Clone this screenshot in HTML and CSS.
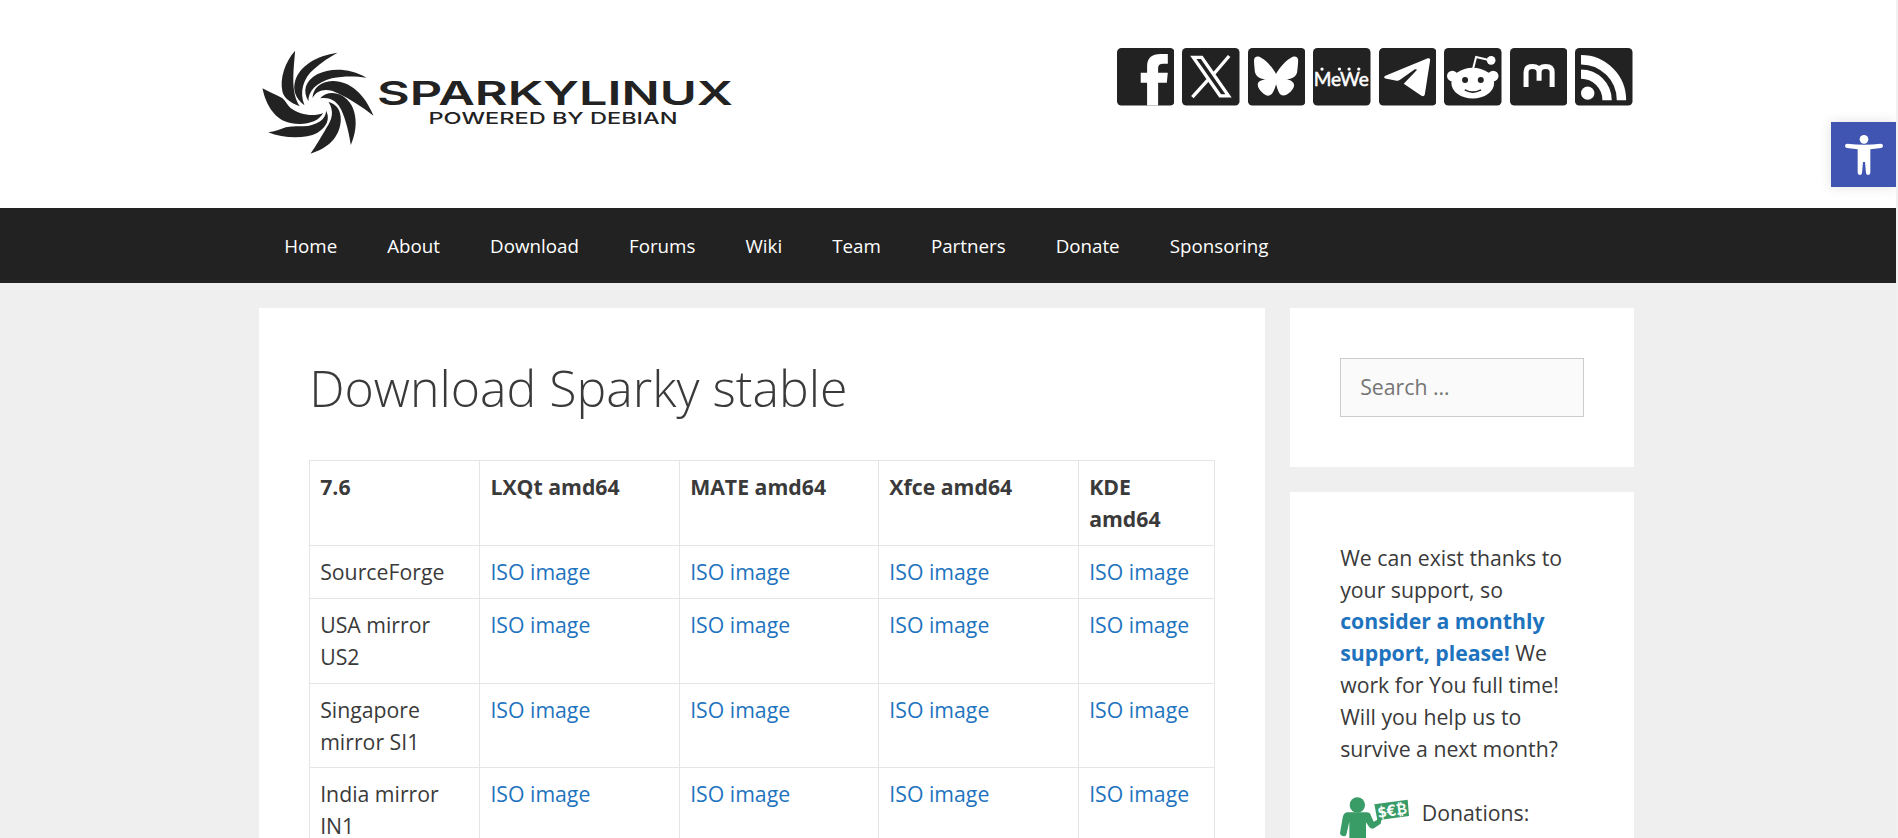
FILE: index.html
```html
<!DOCTYPE html>
<html lang="en">
<head>
<meta charset="utf-8">
<title>Download Sparky stable</title>
<link rel="stylesheet" href="styles.css">
</head>
<body>
<div class="page">
  <header class="header">
    <div class="wrap header-inner">
      <svg class="logo" viewBox="0 0 480 130" role="img" aria-label="SparkyLinux">
        <g transform="translate(-9.2 0) scale(.333333)">
          <g class="ink">
            <path d="M136 47C106 80 89 130 98 170C103 188 118 201 150 214C122 172 131 110 136 47Z"/>
            <path d="M263 53C200 62 150 92 136 138C128 168 138 190 164 211C148 172 160 130 192 103C214 82 240 66 263 53Z"/>
            <path d="M350 128C300 98 240 98 202 118C165 140 158 168 176 199C174 170 200 142 246 130C285 122 320 124 350 128Z"/>
            <path d="M371 242C345 178 300 137 248 138C212 140 190 158 188 190C200 162 235 158 264 175C301 192 335 215 371 242Z"/>
            <path d="M303 330C326 280 322 222 291 193C267 168 230 168 211 190C240 184 264 199 275 226C288 255 298 295 303 330Z"/>
            <path d="M182 356C236 340 271 305 273 255C273 226 262 208 236 201C254 228 247 254 230 278C213 308 200 330 182 356Z"/>
            <path d="M55 292C100 310 165 313 202 294C232 275 241 250 229 227C229 252 202 272 160 274C135 274 125 274 108 277C92 283 75 290 55 292Z"/>
            <path d="M38 160C48 210 76 256 122 264C165 272 205 262 220 234C192 246 150 240 122 219C112 210 108 198 98 190C80 180 60 172 38 160Z"/>
          </g>
        </g>
        <text class="logo-name" x="118" y="70" textLength="356" lengthAdjust="spacingAndGlyphs">SPARKYLINUX</text>
        <text class="logo-sub" x="169.5" y="89" textLength="249" lengthAdjust="spacingAndGlyphs">POWERED BY DEBIAN</text>
      </svg>
      <div class="social">
        <svg viewBox="0 0 172 172"><rect class="ink" width="172" height="172" rx="13"/><path class="w" d="M90 172V104H71V74H90V55C90 30 104 18 130 18H152V47H138C128 47 123 51 123 60V74H152L149 104H123V172Z"/></svg>
        <svg viewBox="0 0 172 172"><rect class="ink" width="172" height="172" rx="13"/><path class="s" stroke-width="10" d="M34 28H59L139 143H114ZM141 24L93 80M79 94L31 147"/></svg>
        <svg viewBox="0 0 172 172"><rect class="ink" width="172" height="172" rx="13"/><path class="w" transform="translate(18 18) scale(5.5)" d="M12 10.8c-1.087-2.114-4.046-6.053-6.798-7.995C2.566.944 1.561 1.266.902 1.565.139 1.908 0 3.08 0 3.768c0 .69.378 5.65.624 6.479.815 2.736 3.713 3.66 6.383 3.364-3.912.58-7.387 2.005-2.83 7.078 5.013 5.19 6.87-1.113 7.823-4.308.953 3.195 2.05 9.271 7.733 4.308 4.267-4.308 1.172-6.498-2.74-7.078 2.67.297 5.568-.628 6.383-3.364.246-.828.624-5.79.624-6.478 0-.69-.139-1.861-.902-2.206-.659-.298-1.664-.62-4.3 1.24C16.046 4.748 13.087 8.687 12 10.8Z"/></svg>
        <svg viewBox="0 0 172 172"><rect class="ink" width="172" height="172" rx="13"/><text class="mewe" x="2" y="114" textLength="165" lengthAdjust="spacingAndGlyphs">MeWe</text><g class="w"><circle cx="27" cy="63" r="5"/><circle cx="79" cy="63" r="5"/><circle cx="108" cy="63" r="5"/><circle cx="137" cy="63" r="5"/></g></svg>
        <svg viewBox="0 0 172 172"><rect class="ink" width="172" height="172" rx="13"/><path class="w" d="M146 31Q154 29 153 37L137 139Q135 147 127 143L74 107L114 65Q108 62 102 67L62 96Q56 100 49 97L19 91Q12 88 19 83Z"/></svg>
        <svg viewBox="0 0 172 172"><rect class="ink" width="172" height="172" rx="13"/><g class="w"><ellipse cx="86" cy="105" rx="64" ry="46"/><circle cx="25" cy="84" r="16"/><circle cx="147" cy="84" r="16"/><circle cx="141" cy="37" r="13"/></g><path class="s" stroke-width="6" d="M87 62L96 27L134 36"/><g class="ink"><circle cx="63" cy="96" r="9"/><circle cx="110" cy="96" r="9"/></g><path class="smile" d="M64 126Q86 138 109 126"/></svg>
        <svg viewBox="0 0 172 172"><rect class="ink" width="172" height="172" rx="13"/><path class="s" stroke-width="15" d="M48 117V72Q48 55 67 55Q87 55 87 72V98V72Q87 55 107 55Q126 55 126 72V117"/></svg>
        <svg viewBox="0 0 172 172"><rect class="ink" width="172" height="172" rx="13"/><circle class="w" cx="38" cy="135" r="20"/><path class="s" stroke-width="28" d="M18 78A78 78 0 0 1 96 156M18 35A121 121 0 0 1 139 156"/></svg>
      </div>
    </div>
  </header>
  <nav class="nav">
    <div class="wrap nav-inner">
      <a>Home</a><a>About</a><a>Download</a><a>Forums</a><a>Wiki</a><a>Team</a><a>Partners</a><a>Donate</a><a>Sponsoring</a>
    </div>
  </nav>
  <div class="wrap content">
    <main class="card main">
      <h1>Download Sparky stable</h1>
      <table>
        <colgroup><col class="c1"><col class="c2"><col class="c3"><col class="c4"><col class="c5"></colgroup>
        <tr><th>7.6</th><th>LXQt amd64</th><th>MATE amd64</th><th>Xfce amd64</th><th>KDE amd64</th></tr>
        <tr><td>SourceForge</td><td><a>ISO image</a></td><td><a>ISO image</a></td><td><a>ISO image</a></td><td><a>ISO image</a></td></tr>
        <tr><td>USA mirror US2</td><td><a>ISO image</a></td><td><a>ISO image</a></td><td><a>ISO image</a></td><td><a>ISO image</a></td></tr>
        <tr><td>Singapore mirror SI1</td><td><a>ISO image</a></td><td><a>ISO image</a></td><td><a>ISO image</a></td><td><a>ISO image</a></td></tr>
        <tr><td>India mirror IN1</td><td><a>ISO image</a></td><td><a>ISO image</a></td><td><a>ISO image</a></td><td><a>ISO image</a></td></tr>
      </table>
    </main>
    <aside class="side">
      <section class="card"><input class="search" type="search" placeholder="Search …"></section>
      <section class="card support">
        <p>We can exist thanks to your support, so <a><b>consider a monthly support, please!</b></a> We work for You full time! Will you help us to survive a next month?</p>
        <div class="donate">
          <svg viewBox="0 0 207 207">
            <g class="green"><circle cx="52" cy="24" r="23"/><path d="M22 46H80Q90 46 93 56L101 74L112 68L117 55L125 67L122 80L102 94Q92 98 86 88L78 76V207H28V74L19 113Q16 119 8 117Q0 115 0 108L8 62Q11 47 22 46Z"/><path d="M103 22L203 8L207 57L112 70Z"/></g>
            <text class="cash" transform="translate(115 62) rotate(-8)" textLength="88" lengthAdjust="spacingAndGlyphs">$€₿</text>
          </svg>
          <span>Donations:</span>
        </div>
      </section>
    </aside>
  </div>
</div>
<div class="access">
  <svg viewBox="0 0 195 195"><circle class="w" cx="99" cy="52" r="13"/><path class="w" d="M49 65Q99 71 149 65Q156 65 156 72Q156 77 150 78L118 82V153Q117 159 111 159Q106 159 105 153L102 120H96L93 153Q92 159 87 159Q81 159 80 153V82L48 78Q42 77 42 72Q42 65 49 65Z"/></svg>
</div>
</body>
</html>
```
FILE: styles.css
```css
* { box-sizing: border-box; }
html { background: #f1f1f1; }
body {
  margin: 0;
  height: 838px;
  overflow: hidden;
  font: 400 21.25px/1.5 "Open Sans", "Noto Sans", sans-serif;
  color: #3a3a3a;
}
a { color: #1e73be; }
.page { width: 1896px; height: 838px; overflow: hidden; background: #efefef; }
.wrap { width: 1375px; margin-left: 259.2px; }
.header { height: 208px; background: #fff; }
.header-inner { display: flex; justify-content: space-between; align-items: flex-start; padding-top: 48px; }
.logo { width: 480px; height: 130px; margin-top: -13px; margin-bottom: -20px; }
.logo-name { font: 600 33px/1 Inter, "Open Sans", sans-serif; fill: #222; }
.logo-sub { font: 500 16px/1 Inter, "Open Sans", sans-serif; fill: #222; }
.ink { fill: #222; }
.w { fill: #fff; }
.s { fill: none; stroke: #fff; }
.smile { fill: none; stroke: #222; stroke-width: 5; stroke-linecap: round; }
.mewe { font: 400 56px Lato, sans-serif; fill: #fff; stroke: #fff; stroke-width: 1.5; }
.social { display: flex; gap: 8px; padding-right: 1.7px; }
.social svg { width: 57.5px; height: 57.5px; display: block; }
.nav { background: #222; height: 75px; }
.nav-inner { display: flex; }
.nav a { padding: 0 25.07px 0 25px; color: #fff; font-size: 18.75px; line-height: 75px; }
.content { display: flex; gap: 25px; padding-top: 25px; align-items: flex-start; }
.card { background: #fff; padding: 50px; }
.main { width: 1006px; }
h1 { margin: 0 0 42.3px; font-size: 50px; font-weight: 300; line-height: 60px; }
table {
  width: 906px;
  table-layout: fixed;
  border-collapse: separate;
  border-spacing: 0;
  border: solid rgba(0, 0, 0, .1);
  border-width: 1px 0 0 1px;
}
th, td {
  padding: 10px;
  border: solid rgba(0, 0, 0, .1);
  border-width: 0 1px 1px 0;
  text-align: left;
  vertical-align: top;
}
th { font-weight: 700; }
.c1 { width: 170.2px; }
.c2, .c4 { width: 199.8px; }
.c3 { width: 199.2px; }
.c5 { width: 136px; }
.side { width: 344px; display: flex; flex-direction: column; gap: 25px; }
.search {
  display: block;
  width: 244px;
  height: 59px;
  padding: 11px 19px 13px;
  border: 1px solid #ccc;
  background: #fafafa;
  font: inherit;
  appearance: none;
}
.search::placeholder { color: #757575; }
.support { padding-top: 49.7px; }
p { margin: 0 0 31.875px; }
.donate { display: flex; align-items: flex-start; gap: 12.6px; }
.donate svg { width: 69px; height: 69px; display: block; }
.green { fill: #399b66; }
.cash { font: 700 46px "DejaVu Sans", sans-serif; fill: #fff; }
.access {
  position: absolute;
  top: 122px;
  left: 1831px;
  width: 65px;
  height: 65px;
  background: #4054b2;
  box-shadow: 0 0 12px rgba(0, 0, 0, .12);
  clip-path: inset(-20px 0 -20px -20px);
}
.access svg { display: block; width: 65px; height: 65px; }
```
